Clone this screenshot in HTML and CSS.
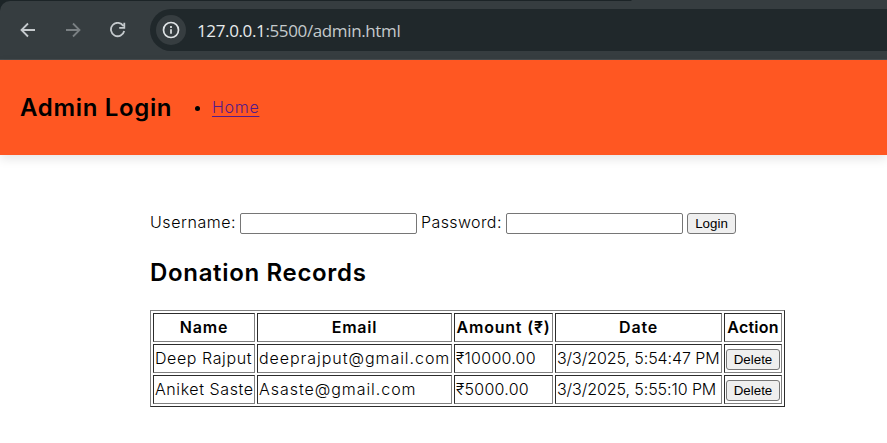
FILE: index.html
```html
<!DOCTYPE html>
<html lang="en">
<head>
<meta charset="utf-8">
<title>Admin Login</title>
<link rel="stylesheet" href="styles.css">
</head>
<body>
<div class="tabstrip">
<div class="toolbar">
  <svg class="nav-icon" viewBox="0 0 16 16"><path d="M15 8H2M8 1.5L1.5 8L8 14.5"/></svg>
  <svg class="nav-icon dim" viewBox="0 0 16 16"><path d="M1 8h13M8 1.5L14.500 8L8 14.500"/></svg>
  <svg class="nav-icon" viewBox="0 0 16 16"><path d="M13.300 3.900A6.700 6.700 0 1 0 14.200 9M14.300 .8v5H9.200"/></svg>
  <div class="address">
    <span class="info"><svg viewBox="0 0 18 18"><circle cx="9" cy="9" r="7.500"/><path d="M9 8.200v4.600M9 5.100v1.800"/></svg></span>
    <span class="url"><b>127.0.0.1</b>:5500/admin.html</span>
  </div>
</div>
</div>
<header class="site-header">
  <h2 class="brand">Admin Login</h2>
  <ul class="menu"><li><a href="#">Home</a></li></ul>
</header>
<main>
  <form class="login">
    <label class="user" for="u">Username:</label><input id="u" type="text">
    <label class="pass" for="p">Password:</label><input id="p" type="password">
    <button type="button">Login</button>
  </form>
  <h2 class="title">Donation Records</h2>
  <table border="1">
    <colgroup><col class="c-name"><col class="c-email"><col class="c-amount"><col class="c-date"><col class="c-action"></colgroup>
    <tr><th>Name</th><th>Email</th><th>Amount (₹)</th><th>Date</th><th class="action">Action</th></tr>
    <tr><td class="name">Deep Rajput</td><td class="email">deeprajput@gmail.com</td><td class="amount">₹10000.00</td><td class="date">3/3/2025, 5:54:47 PM</td><td><button type="button">Delete</button></td></tr>
    <tr><td class="name">Aniket Saste</td><td class="email">Asaste@gmail.com</td><td class="amount">₹5000.00</td><td class="date">3/3/2025, 5:55:10 PM</td><td><button type="button">Delete</button></td></tr>
  </table>
</main>
</body>
</html>
```
FILE: styles.css
```css
* { box-sizing: border-box; }
body { margin: 0; background: #fff; color: #000; font: 300 16px/24px Inter, "Noto Sans", sans-serif; overflow: hidden; }
.tabstrip { height: 60px; padding-top: 1px; background: linear-gradient(90deg, #1c2427 631px, #363d40 632px); }
.toolbar { height: 59px; display: flex; align-items: center; padding-left: 20px; background: #363d40; border-bottom: 1px solid #474c4f; border-top-left-radius: 10px; }
.nav-icon { width: 16px; height: 16px; margin-right: 29px; fill: none; stroke: #c5cacd; stroke-width: 1.8; flex: none; }
.nav-icon.dim { stroke: #7a8083; }
.address { flex: 1; height: 42px; display: flex; align-items: center; padding-left: 6px; margin-left: -5px; border-radius: 21px 0 0 21px; background: #20282b; }
.info { width: 30px; height: 30px; display: grid; place-items: center; border-radius: 50%; background: #363d40; margin-right: 10px; }
.info svg { width: 18px; height: 18px; fill: none; stroke: #dfe3e5; stroke-width: 1.7; }
.url { padding: 2px 0 0 1px; font: 400 17px/24px "Open Sans", sans-serif; color: #c4cacc; letter-spacing: -.37px; white-space: nowrap; }
.url b { font-weight: 400; color: #e8ebec; }
.site-header { height: 95px; display: flex; align-items: center; padding: 0 20px; background: #ff5722; box-shadow: 0 4px 10px rgba(0,0,0,.1); }
h2 { margin: 0; font-size: 24px; font-weight: 600; line-height: 36px; letter-spacing: .67px; white-space: nowrap; }
.brand { width: 152px; }
.menu { margin: 0; padding: 0 0 2px 40px; letter-spacing: .7px; }
.menu li::marker { font-weight: 700; }
.menu a { color: #551a8b; text-underline-offset: 3px; }
main { padding: 56px 102px 0 150px; }
.login { display: flex; align-items: center; height: 24px; }
label { padding-bottom: 2px; white-space: nowrap; }
.user { width: 90px; letter-spacing: .55px; }
.pass { width: 85px; margin-left: 4px; letter-spacing: .4px; }
input { width: 177px; height: 21px; margin: 0; border: 1px solid #767676; border-radius: 2px; background: #fff; position: relative; top: .5px; }
button { height: 21px; padding: 0; margin: 0; border: 1px solid #767676; border-radius: 3px; background: #efefef; color: #000; font: 400 13.333px/17px "Liberation Sans", sans-serif; }
.login button { width: 49px; margin-left: 4px; position: relative; top: .5px; }
.title { margin: 20px 0 19px; }
table { table-layout: fixed; width: 635px; height: 97px; border-spacing: 2px; }
.c-name { width: 102px; }
.c-email { width: 195px; }
.c-amount { width: 99px; }
.c-date { width: 167px; }
.c-action { width: 58px; }
th, td { height: 29px; padding: 1px; line-height: 25px; white-space: nowrap; }
th { font-weight: 600; letter-spacing: .8px; }
th.action { letter-spacing: .2px; }
.name { letter-spacing: .58px; }
.email { letter-spacing: .95px; }
.amount { letter-spacing: .25px; }
.date { letter-spacing: -.08px; }
td button { display: block; width: 54px; margin-top: 2px; letter-spacing: 0; }
```
